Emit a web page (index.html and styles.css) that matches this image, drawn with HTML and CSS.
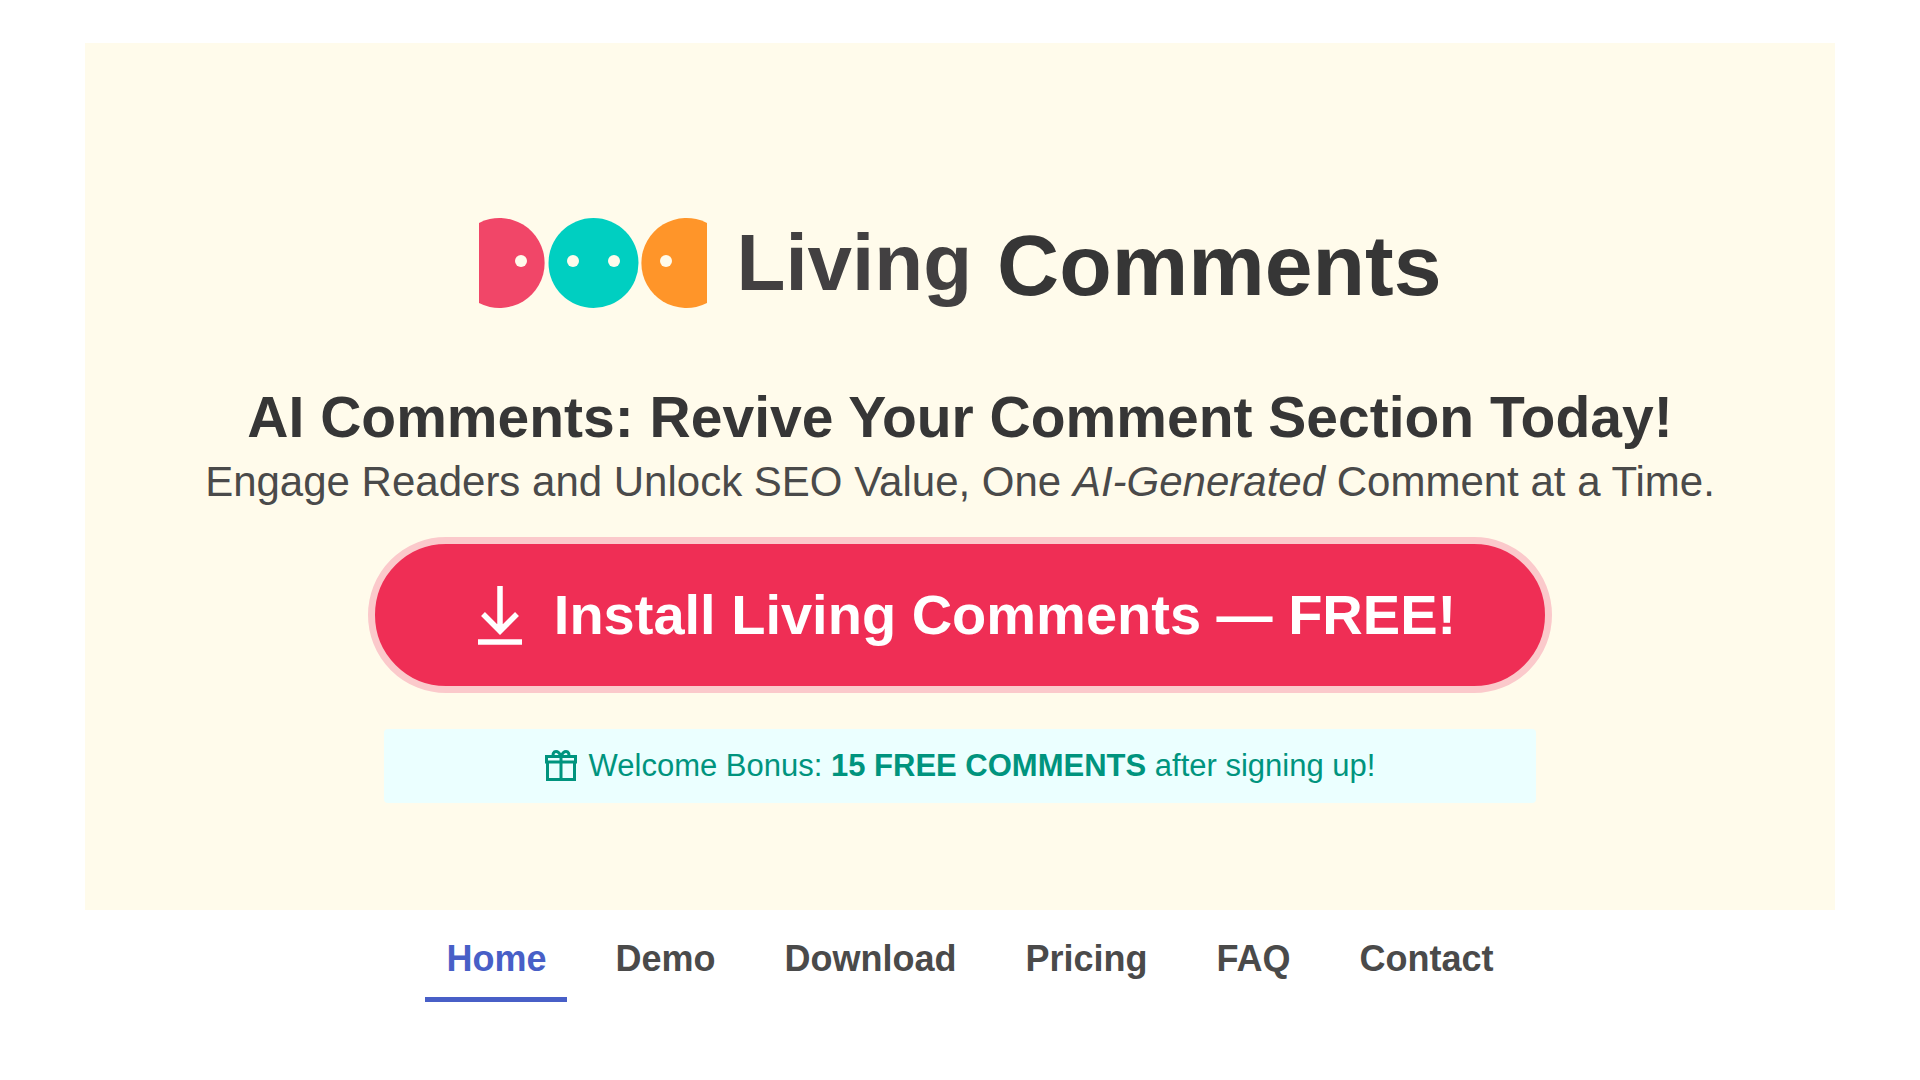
FILE: index.html
```html
<!DOCTYPE html>
<html lang="en">
<head>
<meta charset="utf-8">
<meta name="viewport" content="width=device-width, initial-scale=1">
<title>Living Comments</title>
<link rel="stylesheet" href="styles.css">
</head>
<body>
<header class="hero">
  <a class="brand" href="#home">
    <svg class="brand-mark" viewBox="0 0 228 90" aria-hidden="true">
      <path d="M0 5A45 45 0 1 1 0 85Z" fill="#f14668"/>
      <circle cx="114.500" cy="45" r="45" fill="#00cfc1"/>
      <path d="M228 5A45 45 0 1 0 228 85Z" fill="#ff9529"/>
      <g fill="#fffbeb"><circle cx="42" cy="43" r="6"/><circle cx="94" cy="43" r="6"/><circle cx="135" cy="43" r="6"/><circle cx="187" cy="43" r="6"/></g>
    </svg>
    <span class="brand-name"><span class="brand-first">Living</span> <span class="brand-second">Comments</span></span>
  </a>
  <h1 class="title">AI Comments: Revive Your Comment Section Today!</h1>
  <p class="subtitle">Engage Readers and Unlock SEO Value, One <em>AI-Generated</em> Comment at a Time.</p>
  <button class="install" type="button">
    <svg class="install-icon" viewBox="0 0 44 60" aria-hidden="true"><path d="M22 1V47M5 29L22 46L39 29M0 57H44" fill="none" stroke="currentColor" stroke-width="5.500"/></svg>
    <span>Install Living Comments — FREE!</span>
  </button>
  <p class="bonus">
    <svg class="bonus-icon" viewBox="0 0 32 32" aria-hidden="true"><path d="M1.500 6.500H30.500V12H1.500ZM2.500 12V29.500H29.500V12M16 6.500V29.500M16 6.500C15 4 13.500 1.500 11 1.500C8.500 1.500 7.500 4 8.500 6.500M16 6.500C17 4 18.500 1.500 21 1.500C23.500 1.500 24.500 4 23.500 6.500" fill="none" stroke="currentColor" stroke-width="3"/></svg>
    <span>Welcome Bonus: <strong>15 FREE COMMENTS</strong> after signing up!</span>
  </p>
</header>
<nav class="tabs">
  <a class="tab tab-active" href="#home">Home</a>
  <a class="tab" href="#demo">Demo</a>
  <a class="tab" href="#download">Download</a>
  <a class="tab" href="#pricing">Pricing</a>
  <a class="tab" href="#faq">FAQ</a>
  <a class="tab" href="#contact">Contact</a>
</nav>
</body>
</html>
```

FILE: styles.css
```css
* { box-sizing: border-box; }
body { margin: 0; padding: 43px 85px; background: #fff; color: #363636; font-family: "Liberation Sans", Arial, sans-serif; }
.hero { display: flex; flex-direction: column; align-items: center; padding: 168px 24px 107px; background: #fffbeb; text-align: center; }
.brand { display: flex; align-items: center; gap: 30px; color: #363636; text-decoration: none; }
.brand-mark { width: 228px; height: 90px; }
.brand-name { display: flex; align-items: center; gap: 25px; line-height: 100px; font-weight: 700; }
.brand-first { color: #424041; font-size: 80px; }
.brand-second { padding-top: 4px; font-size: 86px; }
.title { margin: 70px 0 0; font-size: 57px; line-height: 64px; font-weight: 700; }
.subtitle { margin: 0; font-size: 42px; line-height: 66px; color: #4a4a4a; }
.install { display: flex; align-items: center; justify-content: center; gap: 32px; margin: 22px 0 0; width: 100%; max-width: 1184px; min-height: 156px; padding: 0 0 0 14px; border: 7px solid #fbc9cb; border-radius: 78px; background: #ef2e55; color: #fff; font: 700 56px/64px "Liberation Sans", Arial, sans-serif; }
.install-icon { width: 44px; height: 60px; }
.bonus { display: flex; align-items: center; justify-content: center; gap: 12px; margin: 36px 0 0; width: 100%; max-width: 1152px; min-height: 74px; border-radius: 4px; background: #ebffff; color: #00947e; font-size: 31px; }
.bonus-icon { width: 32px; height: 32px; }
.tabs { display: flex; flex-wrap: wrap; justify-content: center; gap: 27px; padding-left: 20px; }
.tab { padding: 29px 21px 18px; border-bottom: 5px solid transparent; color: #4a4a4a; font-size: 36px; line-height: 40px; font-weight: 700; text-decoration: none; }
.tab-active { color: #485fc7; border-color: #485fc7; }
```
